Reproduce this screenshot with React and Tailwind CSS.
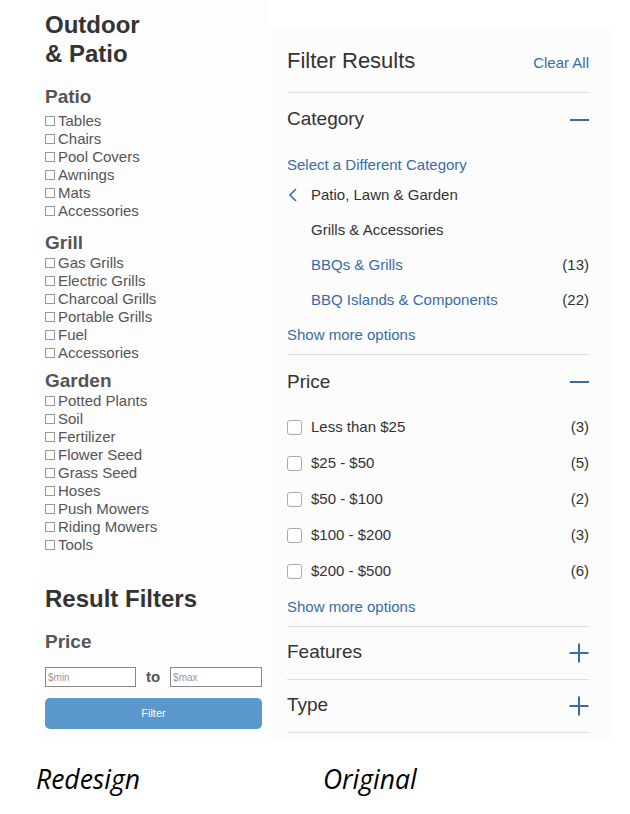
const patio = ['Tables', 'Chairs', 'Pool Covers', 'Awnings', 'Mats', 'Accessories'];
const grill = ['Gas Grills', 'Electric Grills', 'Charcoal Grills', 'Portable Grills', 'Fuel', 'Accessories'];
const garden = ['Potted Plants', 'Soil', 'Fertilizer', 'Flower Seed', 'Grass Seed', 'Hoses', 'Push Mowers', 'Riding Mowers', 'Tools'];
const prices = [
    ['Less than $25', 3],
    ['$25 - $50', 5],
    ['$50 - $100', 2],
    ['$100 - $200', 3],
    ['$200 - $500', 6],
];

function ItemList({ items }) {
    return (
        <ul>
            {items.map((it, i) => (
                <li key={i} className="flex items-center h-[18px] text-[15px] leading-[18px] text-[#555]">
                    <span className="inline-block w-[10px] h-[10px] border border-[#999] mr-[3px]" />
                    {it}
                </li>
            ))}
        </ul>
    );
}

function Minus() {
    return <div className="w-[19px] h-[2px] bg-[#3a6ba5]" />;
}

function Plus() {
    return (
        <svg width="20" height="20" viewBox="0 0 20 20">
            <path d="M10 0.5v19M0.5 10h19" stroke="#3a6ba5" strokeWidth="2" fill="none" />
        </svg>
    );
}

export default function App() {
    return (
        <div className="w-[630px] h-[814px] bg-white relative" style={{ fontFamily: '"Liberation Sans", Arial, sans-serif' }}>
            <div className="flex">
                <div className="ml-[40px] w-[228px] h-[740px] pl-[5px] pr-[6px] pt-[10px] bg-[#fdfdfd]">
                    <h1 className="text-[24px] leading-[29px] font-bold text-[#333]">Outdoor<br />&amp; Patio</h1>
                    <h2 className="mt-[18px] text-[19px] leading-[22px] font-bold text-[#555]">Patio</h2>
                    <div className="mt-[4px]"><ItemList items={patio} /></div>
                    <h2 className="mt-[12px] text-[19px] leading-[22px] font-bold text-[#555]">Grill</h2>
                    <ItemList items={grill} />
                    <h2 className="mt-[8px] text-[19px] leading-[22px] font-bold text-[#555]">Garden</h2>
                    <ItemList items={garden} />

                    <h1 className="mt-[30px] text-[24px] leading-[29px] font-bold text-[#333]">Result Filters</h1>
                    <h2 className="mt-[18px] text-[19px] leading-[22px] font-bold text-[#555]">Price</h2>
                    <div className="mt-[14px] flex items-center h-[20px]">
                        <input className="w-[91px] min-w-0 h-[20px] border border-[#888] px-[2px] text-[10px] text-[#999] placeholder:text-[#999] outline-none bg-white" placeholder="$min" />
                        <span className="mx-[10px] text-[15px] font-bold text-[#555]">to</span>
                        <input className="w-[92px] min-w-0 h-[20px] border border-[#888] px-[2px] text-[10px] text-[#999] placeholder:text-[#999] outline-none bg-white" placeholder="$max" />
                    </div>
                    <button className="mt-[11px] w-full h-[31px] rounded-[5px] bg-[#5a98cc] text-white text-[11px]">Filter</button>
                </div>

                <div className="ml-[2px] mt-[30px] w-[342px] h-[708px] pl-[17px] pr-[23px] bg-[#fcfcfc] text-[#333]">
                    <div className="flex items-baseline justify-between pt-[18px] pb-[17px] border-b border-[#ddd]">
                        <span className="text-[22px] leading-[26px]">Filter Results</span>
                        <span className="text-[15px] text-[#3a6ba5]">Clear All</span>
                    </div>

                    <div className="flex items-center justify-between h-[54px]">
                        <span className="text-[19px]">Category</span>
                        <Minus />
                    </div>
                    <div className="mt-[7px] h-[24px] flex items-center text-[15px] text-[#3a6ba5]">Select a Different Category</div>
                    <div className="h-[35px] flex items-center text-[15px]">
                        <svg width="24" height="14" viewBox="0 0 24 14" className="shrink-0">
                            <path d="M9 1L3 7l6 6" stroke="#3a6ba5" strokeWidth="1.6" fill="none" />
                        </svg>
                        Patio, Lawn &amp; Garden
                    </div>
                    <div className="h-[35px] flex items-center pl-[24px] text-[15px]">Grills &amp; Accessories</div>
                    <div className="h-[35px] flex items-center justify-between pl-[24px] text-[15px]">
                        <span className="text-[#3a6ba5]">BBQs &amp; Grills</span>
                        <span>(13)</span>
                    </div>
                    <div className="h-[35px] flex items-center justify-between pl-[24px] text-[15px]">
                        <span className="text-[#3a6ba5]">BBQ Islands &amp; Components</span>
                        <span>(22)</span>
                    </div>
                    <div className="h-[37px] flex items-center text-[15px] text-[#3a6ba5] border-b border-[#ddd]">Show more options</div>

                    <div className="flex items-center justify-between h-[55px]">
                        <span className="text-[19px]">Price</span>
                        <Minus />
                    </div>
                    {prices.map(([label, n]) => (
                        <div key={label} className="h-[36px] flex items-center text-[15px]">
                            <span className="w-[15px] h-[15px] rounded-[3px] border border-[#aaa] bg-white mr-[9px]" />
                            <span className="flex-1">{label}</span>
                            <span>({n})</span>
                        </div>
                    ))}
                    <div className="h-[37px] flex items-center text-[15px] text-[#3a6ba5] border-b border-[#ddd]">Show more options</div>

                    <div className="flex items-center justify-between h-[53px] border-b border-[#ddd]">
                        <span className="text-[19px]">Features</span>
                        <Plus />
                    </div>
                    <div className="flex items-center justify-between h-[53px] border-b border-[#ddd]">
                        <span className="text-[19px]">Type</span>
                        <Plus />
                    </div>
                </div>
            </div>

            <div className="flex mt-[20px] text-[26.5px] italic text-black" style={{ fontFamily: '"Open Sans", sans-serif' }}>
                <span className="ml-[36px] w-[287px]">Redesign</span>
                <span>Original</span>
            </div>
        </div>
    );
}
